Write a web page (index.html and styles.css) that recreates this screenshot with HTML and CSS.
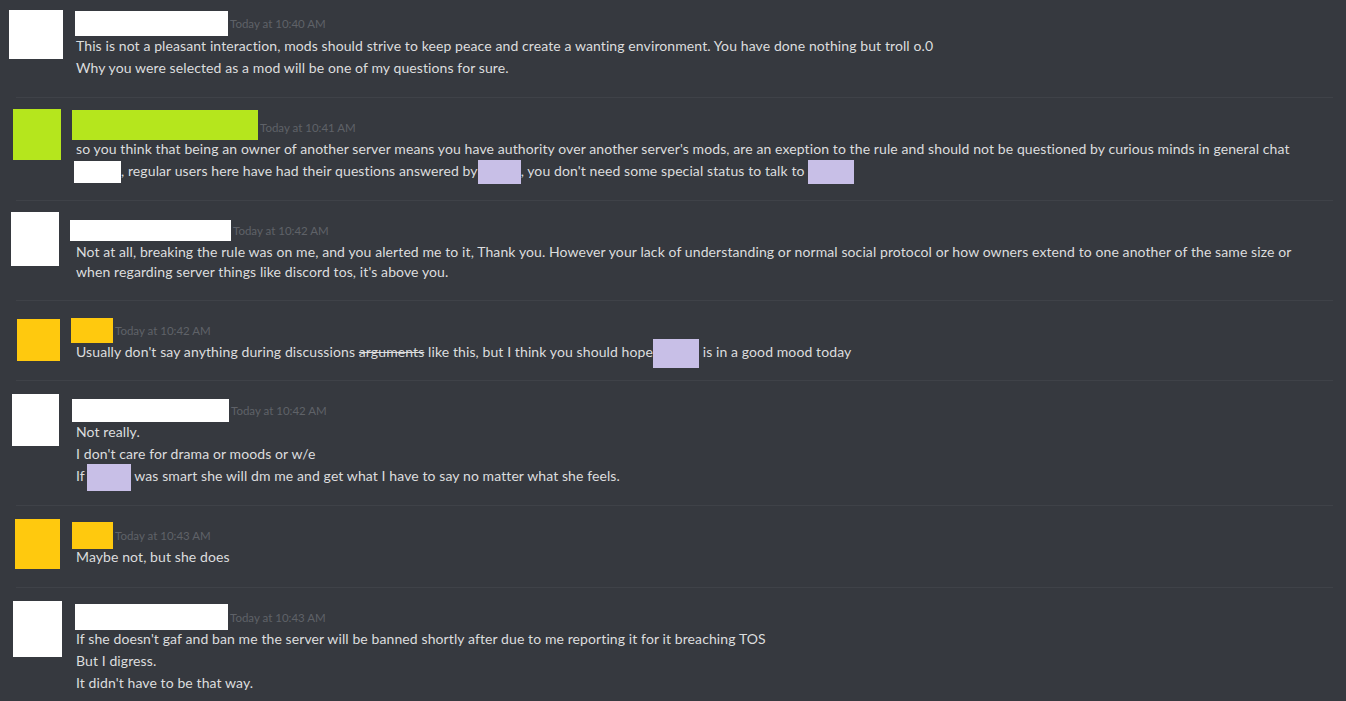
FILE: index.html
```html
<!DOCTYPE html>
<html>
<head>
<meta charset="utf-8">
<link rel="stylesheet" href="styles.css">
</head>
<body>
<div class="chat">
  <div class="msg m1">
    <div class="gutter"><div class="avatar white"></div></div>
    <div class="body">
      <div class="head"><span class="name white"></span><span class="time">Today at 10:40 AM</span></div>
      <div class="line">This is not a pleasant interaction, mods should strive to keep peace and create a wanting environment. You have done nothing but troll o.0</div>
      <div class="line">Why you were selected as a mod will be one of my questions for sure.</div>
    </div>
  </div>
  <div class="divider"></div>
  <div class="msg m2">
    <div class="gutter"><div class="avatar lime"></div></div>
    <div class="body">
      <div class="head"><span class="name lime"></span><span class="time">Today at 10:41 AM</span></div>
      <div class="line">so you think that being an owner of another server means you have authority over another server's mods, are an exeption to the rule and should not be questioned by curious minds in general chat</div>
      <div class="line"><span class="redact white r-a"></span>, regular users here have had their questions answered by<span class="redact lav r-b"></span>, you don't need some special status to talk to <span class="redact lav r-c"></span></div>
    </div>
  </div>
  <div class="divider"></div>
  <div class="msg m3">
    <div class="gutter"><div class="avatar white"></div></div>
    <div class="body">
      <div class="head"><span class="name white"></span><span class="time">Today at 10:42 AM</span></div>
      <div class="line">Not at all, breaking the rule was on me, and you alerted me to it, Thank you. However your lack of understanding or normal social protocol or how owners extend to one another of the same size or</div>
      <div class="line wrap">when regarding server things like discord tos, it's above you.</div>
    </div>
  </div>
  <div class="divider"></div>
  <div class="msg m4">
    <div class="gutter"><div class="avatar yellow"></div></div>
    <div class="body">
      <div class="head"><span class="name yellow"></span><span class="time">Today at 10:42 AM</span></div>
      <div class="line">Usually don't say anything during discussions <s>arguments</s> like this, but I think you should hope<span class="redact lav r-d"></span> is in a good mood today</div>
    </div>
  </div>
  <div class="divider"></div>
  <div class="msg m5">
    <div class="gutter"><div class="avatar white"></div></div>
    <div class="body">
      <div class="head"><span class="name white"></span><span class="time">Today at 10:42 AM</span></div>
      <div class="line">Not really.</div>
      <div class="line">I don't care for drama or moods or w/e</div>
      <div class="line">If<span class="redact lav r-e"></span> was smart she will dm me and get what I have to say no matter what she feels.</div>
    </div>
  </div>
  <div class="divider"></div>
  <div class="msg m6">
    <div class="gutter"><div class="avatar yellow"></div></div>
    <div class="body">
      <div class="head"><span class="name yellow"></span><span class="time">Today at 10:43 AM</span></div>
      <div class="line">Maybe not, but she does</div>
    </div>
  </div>
  <div class="divider"></div>
  <div class="msg m7">
    <div class="gutter"><div class="avatar white"></div></div>
    <div class="body">
      <div class="head"><span class="name white"></span><span class="time">Today at 10:43 AM</span></div>
      <div class="line">If she doesn't gaf and ban me the server will be banned shortly after due to me reporting it for it breaching TOS</div>
      <div class="line">But I digress.</div>
      <div class="line">It didn't have to be that way.</div>
    </div>
  </div>
</div>
</body>
</html>
```

FILE: styles.css
```css
html, body {
  margin: 0;
  padding: 0;
  background: #36393f;
  height: 100%;
  overflow: hidden;
}
.chat {
  font-family: Lato, "Liberation Sans", sans-serif;
  font-size: 14px;
  letter-spacing: 0.1px;
  color: #dcddde;
}
.msg {
  display: flex;
  align-items: flex-start;
  padding: 19px 0 18px 0;
}
.msg.m1 { padding-top: 13px; padding-bottom: 19px; }
.msg.m2, .msg.m5 { padding-bottom: 19px; }
.gutter {
  width: 76px;
  flex: none;
}
.avatar { display: block; }
.white { background: #ffffff; }
.lime { background: #b5e61d; }
.yellow { background: #ffc90e; }
.lav { background: #c8bfe7; }
.body { flex: 1; min-width: 0; }
.head {
  display: flex;
  align-items: center;
  height: 20px;
}
.name { display: block; flex: none; }
.time {
  font-size: 11.5px;
  letter-spacing: 0;
  color: #5f6268;
  margin-left: 2px;
  white-space: nowrap;
}
.line {
  line-height: 20px;
  height: 20px;
  margin-top: 2px;
  white-space: nowrap;
}
.m1 .line:nth-child(2) { margin-top: 3px; }
.line.wrap { margin-top: 0; }
.redact {
  display: inline-block;
  vertical-align: middle;
}
.divider {
  height: 1px;
  background: #3f4248;
  margin: 0 13px 0 16px;
}

/* avatar geometry per message */
.m1 .avatar { width: 54px; height: 49px; margin: -3px 0 0 9px; }
.m2 .avatar { width: 48px; height: 51px; margin: -8px 0 0 13px; }
.m3 .avatar { width: 48px; height: 54px; margin: -8px 0 0 11px; }
.m4 .avatar { width: 43px; height: 42px; margin: -1px 0 0 17px; }
.m5 .avatar { width: 47px; height: 52px; margin: -6px 0 0 12px; }
.m6 .avatar { width: 45px; height: 50px; margin: -6px 0 0 15px; }
.m7 .avatar { width: 49px; height: 56px; margin: -6px 0 0 13px; }

/* name redaction geometry per message */
.m1 .name { width: 153px; height: 25px; margin-left: -1px; }
.m2 .name { width: 186px; height: 30px; margin-left: -4px; transform: translateY(-2px); }
.m3 .name { width: 161px; height: 21px; margin-left: -6px; }
.m4 .name { width: 42px; height: 25px; margin-left: -5px; }
.m5 .name { width: 157px; height: 23px; margin-left: -4px; }
.m6 .name { width: 41px; height: 27px; margin-left: -4px; }
.m7 .name { width: 153px; height: 26px; margin-left: -1px; }

/* inline mention redactions */
.r-a { width: 47px; height: 22px; margin: -2px 0 -2px -2px; }
.r-b { width: 43px; height: 24px; margin: -2px 0; }
.r-c { width: 46px; height: 24px; margin: -2px 0; }
.r-d { width: 46px; height: 29px; margin: -5px 0; }
.r-e { width: 44px; height: 27px; margin: -4px 0 -4px 2px; }
```
